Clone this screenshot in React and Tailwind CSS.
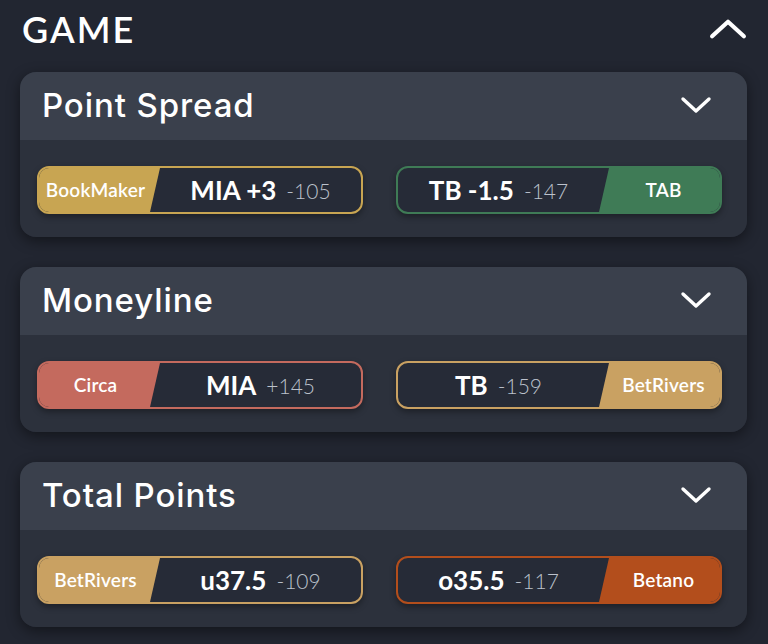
import React from 'react';

const markets = [
  {
    title: 'Point Spread',
    left: { book: 'BookMaker', color: '#c8a552', pick: 'MIA +3', odds: '-105' },
    right: { book: 'TAB', color: '#3f7b56', pick: 'TB -1.5', odds: '-147' },
  },
  {
    title: 'Moneyline',
    left: { book: 'Circa', color: '#c46a5e', pick: 'MIA', odds: '+145' },
    right: { book: 'BetRivers', color: '#c9a162', pick: 'TB', odds: '-159' },
  },
  {
    title: 'Total Points',
    left: { book: 'BetRivers', color: '#c9a162', pick: 'u37.5', odds: '-109' },
    right: { book: 'Betano', color: '#b34e1c', pick: 'o35.5', odds: '-117' },
  },
];

function Chevron({ up, className }) {
  return (
    <svg viewBox="0 0 32 18" className={className} fill="none">
      <polyline
        points={up ? '3,15 16,3 29,15' : '3,3 16,15 29,3'}
        stroke="white"
        strokeWidth="3.4"
        strokeLinecap="round"
        strokeLinejoin="round"
      />
    </svg>
  );
}

function Pill({ side, data }) {
  const badge = (
    <div
      className={
        'h-full w-[121px] flex items-center justify-center text-white text-[19px] font-semibold tracking-[0.2px] ' +
        (side === 'left'
          ? '[clip-path:polygon(0_0,100%_0,calc(100%-10px)_100%,0_100%)] pr-[8px]'
          : '[clip-path:polygon(10px_0,100%_0,100%_100%,0_100%)] pl-[8px]')
      }
      style={{ backgroundColor: data.color }}
    >
      {data.book}
    </div>
  );
  return (
    <div
      className="w-[326px] h-[48px] rounded-[12px] border-2 overflow-hidden flex items-stretch bg-[#262b37] shadow-[0_3px_6px_rgba(0,0,0,0.35)]"
      style={{ borderColor: data.color }}
    >
      {side === 'left' && badge}
      <div className="flex-1 flex items-center justify-center gap-[10px]">
        <span className="text-white text-[26px] font-bold leading-none">{data.pick}</span>
        <span className="text-[#bcc2cc] text-[21px] font-light leading-none">{data.odds}</span>
      </div>
      {side === 'right' && badge}
    </div>
  );
}

function MarketCard({ market }) {
  return (
    <div className="w-[727px] rounded-[16px] overflow-hidden shadow-[0_4px_14px_rgba(0,0,0,0.45)]">
      <div className="h-[68px] bg-[#3a404c] flex items-center justify-between pl-[22px] pr-[35px] pb-[2px]">
        <h2 className="text-white text-[33px] font-medium leading-none tracking-[0.9px] font-['Inter',sans-serif]">
          {market.title}
        </h2>
        <Chevron className="w-[32px] h-[18px]" />
      </div>
      <div className="bg-[#2c313c] pt-[26px] pb-[23px] pl-[17px] flex gap-[33px]">
        <Pill side="left" data={market.left} />
        <Pill side="right" data={market.right} />
      </div>
    </div>
  );
}

export default function App() {
  return (
    <div className="w-[768px] h-[644px] bg-[#222631] pl-[20px] overflow-hidden font-['Lato',sans-serif]">
      <div className="h-[72px] flex items-center justify-between pl-[2px] pr-[20px] pb-[14px]">
        <h1 className="text-white text-[36px] font-semibold leading-none tracking-[2px]">GAME</h1>
        <Chevron up className="w-[40px] h-[22px]" />
      </div>
      <div className="flex flex-col gap-[30px]">
        {markets.map((m) => (
          <MarketCard key={m.title} market={m} />
        ))}
      </div>
    </div>
  );
}
